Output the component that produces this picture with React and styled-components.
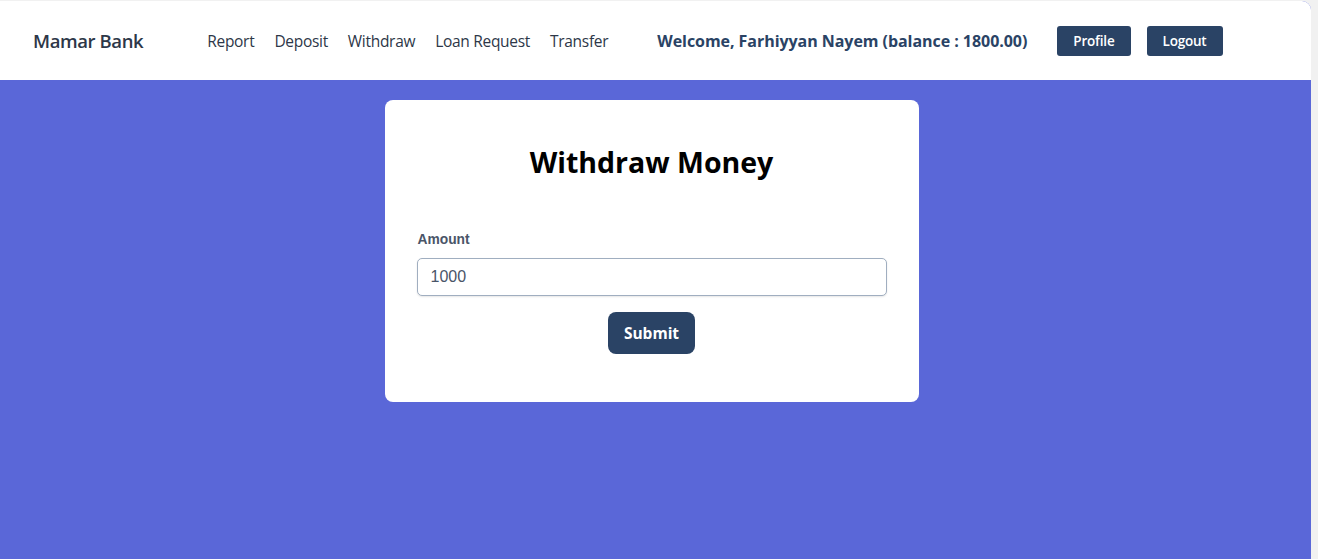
import React, {useState} from "react";
import styled, {createGlobalStyle} from "styled-components";

const GlobalStyle = createGlobalStyle`
  html, body {
    margin: 0;
    padding: 0;
    height: 100%;
    background: #f1f1f1;
  }
  #root {
    height: 100%;
  }
  * {
    box-sizing: border-box;
  }
`

const Frame = styled.div`
  margin: 1px 7px 0 0;
  min-height: calc(100vh - 1px);
  display: flex;
  flex-direction: column;
  background: #5a67d8;
  border-top-right-radius: 9px;
  overflow: hidden;
  font-family: "Segoe UI", "Open Sans", sans-serif;
`

const NavBar = styled.nav`
  height: 79px;
  background: #ffffff;
  display: flex;
  align-items: center;
  padding: 0 33px;
  color: #2d3748;
`

const Brand = styled.a`
  font-size: 18.5px;
  font-weight: 600;
  color: #2d3748;
  text-decoration: none;
  margin-right: 64px;
  letter-spacing: -0.4px;
`

const NavLinks = styled.div`
  display: flex;
  gap: 20px;
  margin-right: 49px;
`

const NavLink = styled.a`
  font-size: 15.5px;
  color: #2d3748;
  text-decoration: none;
  letter-spacing: -0.3px;
`

const Welcome = styled.span`
  font-size: 16px;
  font-weight: 700;
  color: #2a4365;
  margin-right: 30px;
  letter-spacing: -0.05px;
`

const Actions = styled.div`
  display: flex;
  gap: 16px;
`

const NavButton = styled.button`
  height: 30px;
  padding: 0 16px;
  border: none;
  border-radius: 3px;
  background: #2a4365;
  color: #ffffff;
  font-family: inherit;
  font-size: 13.5px;
  font-weight: 600;
  letter-spacing: -0.2px;
  cursor: pointer;
`

const Main = styled.main`
  flex: 1;
  display: flex;
  justify-content: center;
  align-items: flex-start;
  padding: 20px 8px 0 0;
`

const Card = styled.form`
  width: 534px;
  background: #ffffff;
  border-radius: 8px;
  padding: 32px 32px 48px;
  display: flex;
  flex-direction: column;
`

const Title = styled.h1`
  margin: 12px 0 50px;
  text-align: center;
  font-size: 28.5px;
  line-height: 36px;
  font-weight: 700;
  color: #000000;
`

const Label = styled.label`
  font-family: "Liberation Sans", Arial, sans-serif;
  font-size: 13.8px;
  line-height: 20px;
  font-weight: 700;
  color: #4a5568;
  margin: 0 0 8px 1px;
`

const Input = styled.input`
  height: 38px;
  width: 100%;
  padding: 0 13px;
  border: 1px solid #a0aec0;
  border-radius: 5px;
  box-shadow: 0 1px 2px rgba(0, 0, 0, 0.1);
  font-family: "Liberation Sans", Arial, sans-serif;
  font-size: 16px;
  color: #4a5568;
  outline: none;
`

const Submit = styled.button`
  align-self: center;
  margin-top: 16px;
  height: 42px;
  padding: 0 16px;
  border: none;
  border-radius: 8px;
  background: #2a4365;
  color: #ffffff;
  font-family: inherit;
  font-size: 15.5px;
  font-weight: 700;
  cursor: pointer;
`

const links = ["Report", "Deposit", "Withdraw", "Loan Request", "Transfer"];

export default function App() {
    const [amount, setAmount] = useState("1000");

    return (
        <>
            <GlobalStyle/>
            <Frame>
                <NavBar>
                    <Brand href="#">Mamar Bank</Brand>
                    <NavLinks>
                        {links.map(link => <NavLink key={link} href="#">{link}</NavLink>)}
                    </NavLinks>
                    <Welcome>Welcome, Farhiyyan Nayem (balance : 1800.00)</Welcome>
                    <Actions>
                        <NavButton type="button">Profile</NavButton>
                        <NavButton type="button">Logout</NavButton>
                    </Actions>
                </NavBar>
                <Main>
                    <Card onSubmit={e => e.preventDefault()}>
                        <Title>Withdraw Money</Title>
                        <Label htmlFor="amount">Amount</Label>
                        <Input id="amount" type="number" value={amount} onChange={e => setAmount(e.target.value)}/>
                        <Submit type="submit">Submit</Submit>
                    </Card>
                </Main>
            </Frame>
        </>
    );
}
